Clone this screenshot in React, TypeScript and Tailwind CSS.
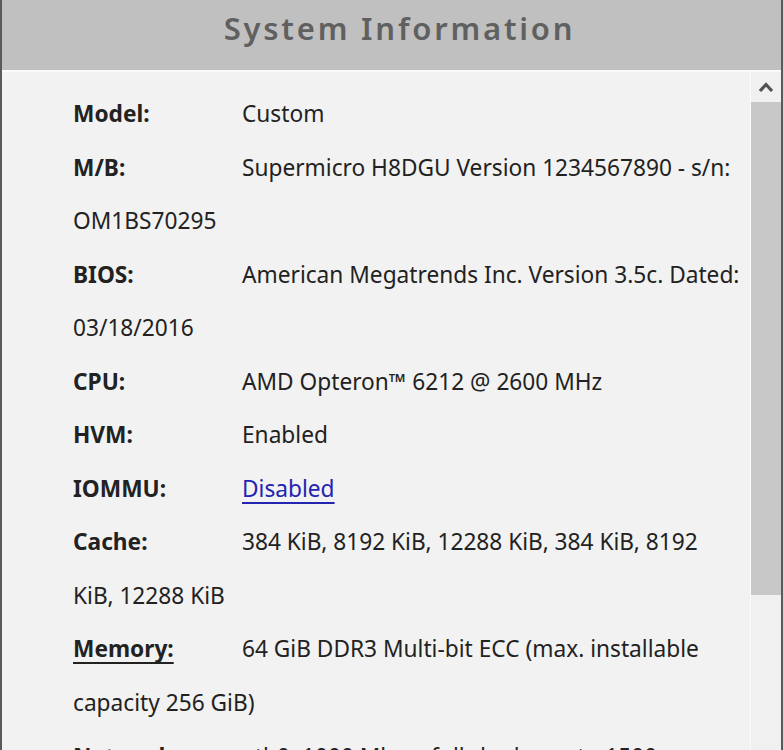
import React from 'react';

type Row = { label: string; value: string; labelLink?: boolean; valueLink?: boolean };

const ROWS: Row[] = [
  { label: 'Model:', value: 'Custom' },
  { label: 'M/B:', value: 'Supermicro H8DGU Version 1234567890 - s/n: OM1BS70295' },
  { label: 'BIOS:', value: 'American Megatrends Inc. Version 3.5c. Dated: 03/18/2016' },
  { label: 'CPU:', value: 'AMD Opteron™ 6212 @ 2600 MHz' },
  { label: 'HVM:', value: 'Enabled' },
  { label: 'IOMMU:', value: 'Disabled', valueLink: true },
  { label: 'Cache:', value: '384 KiB, 8192 KiB, 12288 KiB, 384 KiB, 8192 KiB, 12288 KiB' },
  { label: 'Memory:', value: '64 GiB DDR3 Multi-bit ECC (max. installable capacity 256 GiB)', labelLink: true },
  { label: 'Network:', value: 'eth0: 1000 Mbps, full-duplex, mtu 1500', labelLink: true },
  { label: 'Kernel:', value: 'Linux 4.19.107-Unraid x86_64' },
];

export default function App() {
  return (
    <div className="w-[783px] h-[750px] overflow-hidden flex flex-col bg-[#f2f2f2] border-l-2 border-r-2 border-[#5a5a5a] font-['Noto_Sans',sans-serif]">
      {/* Title bar */}
      <div className="h-[72px] shrink-0 bg-[#c0c0c0] border-b-2 border-[#fafafa] flex items-center justify-center pl-[16px]">
        <h1 className="text-[31px] font-semibold tracking-[2.8px] text-[#606060] leading-none pb-[13px]">
          System Information
        </h1>
      </div>

      {/* Body */}
      <div className="flex-1 flex min-h-0">
        <div className="flex-1 pl-[71px] pr-[9px] pt-[15px] text-[22.7px] leading-[53.55px] text-[#222]">
          {ROWS.map((row) => (
            <div key={row.label}>
              <span className="inline-block w-[169px] font-bold">
                <span className={row.labelLink ? 'underline decoration-[2px] underline-offset-[5px]' : ''}>
                  {row.label}
                </span>
              </span>
              {row.valueLink ? (
                <span className="text-[#2424b0] underline decoration-[2px] underline-offset-[5px]">{row.value}</span>
              ) : (
                row.value
              )}
            </div>
          ))}
        </div>

        {/* Scrollbar */}
        <div className="w-[31px] shrink-0 border-l border-[#fafafa] flex flex-col bg-[#f0f0f0]">
          <div className="h-[30px] flex items-center justify-center">
            <svg width="16" height="12" viewBox="0 0 16 12">
              <path d="M2 10 L8 3.5 L14 10" fill="none" stroke="#505050" strokeWidth="3.2" strokeLinejoin="miter" />
            </svg>
          </div>
          <div className="h-[493px] bg-[#c8c8c8]" />
        </div>
      </div>
    </div>
  );
}
